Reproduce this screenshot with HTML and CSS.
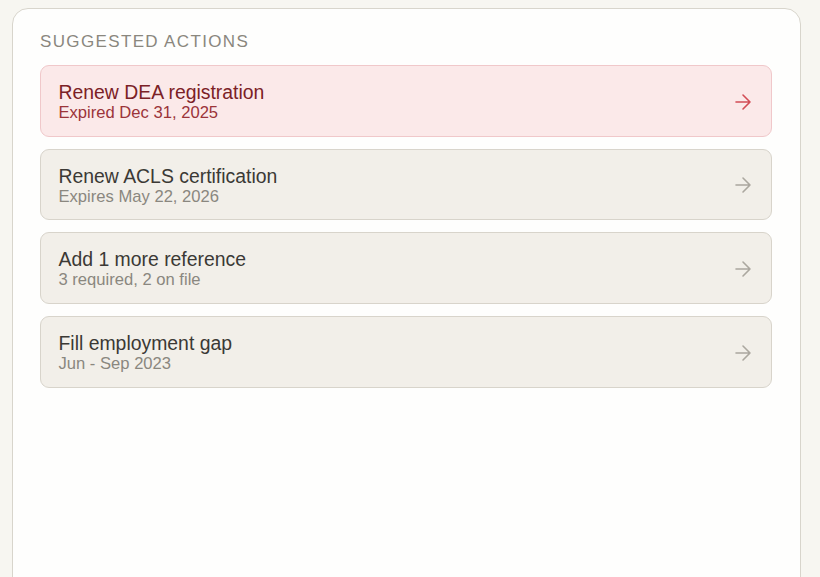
FILE: index.html
```html
<!DOCTYPE html>
<html lang="en">
<head>
<meta charset="utf-8">
<title>Suggested actions</title>
<link rel="stylesheet" href="styles.css">
</head>
<body>
<section class="panel">
  <h2 class="panel-title">Suggested actions</h2>
  <ul class="actions">
    <li class="action action--urgent">
      <div class="action-text">
        <div class="action-title">Renew DEA registration</div>
        <div class="action-sub">Expired Dec 31, 2025</div>
      </div>
      <svg class="arrow" viewBox="0 0 24 24" aria-hidden="true"><path d="M5 12h14M12 5l7 7-7 7"/></svg>
    </li>
    <li class="action">
      <div class="action-text">
        <div class="action-title">Renew ACLS certification</div>
        <div class="action-sub">Expires May 22, 2026</div>
      </div>
      <svg class="arrow" viewBox="0 0 24 24" aria-hidden="true"><path d="M5 12h14M12 5l7 7-7 7"/></svg>
    </li>
    <li class="action">
      <div class="action-text">
        <div class="action-title">Add 1 more reference</div>
        <div class="action-sub">3 required, 2 on file</div>
      </div>
      <svg class="arrow" viewBox="0 0 24 24" aria-hidden="true"><path d="M5 12h14M12 5l7 7-7 7"/></svg>
    </li>
    <li class="action">
      <div class="action-text">
        <div class="action-title">Fill employment gap</div>
        <div class="action-sub">Jun - Sep 2023</div>
      </div>
      <svg class="arrow" viewBox="0 0 24 24" aria-hidden="true"><path d="M5 12h14M12 5l7 7-7 7"/></svg>
    </li>
  </ul>
</section>
</body>
</html>
```

FILE: styles.css
```css
html, body {
  margin: 0;
  padding: 0;
  height: 100%;
  overflow: hidden;
}
body {
  background: #f7f6f1;
  font-family: "Liberation Sans", Arial, sans-serif;
  padding: 8px 19px 0 12px;
  box-sizing: border-box;
}
.panel {
  background: #fefefd;
  border: 1px solid #d8d5cc;
  border-radius: 16px;
  padding: 23px 28px 0 27px;
  height: 590px;
  box-sizing: border-box;
}
.panel-title {
  margin: 0 0 13px;
  font-size: 17px;
  line-height: 20px;
  font-weight: 400;
  text-transform: uppercase;
  letter-spacing: 0.08em;
  color: #8a877e;
}
.actions {
  list-style: none;
  margin: 0;
  padding: 0;
  display: flex;
  flex-direction: column;
  gap: 12px;
}
.action {
  display: flex;
  align-items: center;
  justify-content: space-between;
  padding: 15px 16px 13.7px 17.5px;
  background: #f2efe9;
  border: 1px solid #d8d4cb;
  border-radius: 9px;
}
.action-title {
  font-size: 19.4px;
  line-height: 22px;
  color: #3b3935;
}
.action-sub {
  font-size: 16.6px;
  line-height: 19px;
  color: #8a877f;
}
.arrow {
  width: 24px;
  height: 24px;
  fill: none;
  stroke: #aba79f;
  stroke-width: 1.6;
  stroke-linecap: round;
  stroke-linejoin: round;
}
.action--urgent {
  background: #fbe9e9;
  border-color: #f0c8ca;
}
.action--urgent .action-title {
  color: #7b2126;
}
.action--urgent .action-sub {
  color: #9b3439;
}
.action--urgent .arrow {
  stroke: #d24c55;
}
```
